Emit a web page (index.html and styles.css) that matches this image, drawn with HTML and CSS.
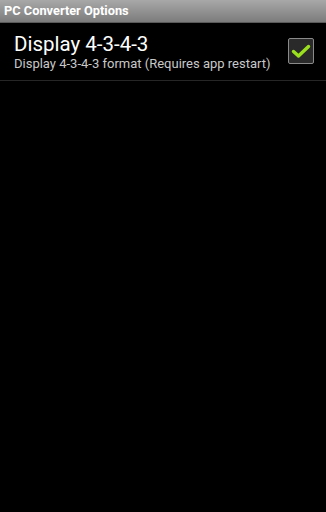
FILE: index.html
```html
<!DOCTYPE html>
<html lang="en">
<head>
    <meta charset="UTF-8">
    <title>PC Converter Options</title>
    <link rel="stylesheet" href="styles.css">
</head>
<body>
<div class="titlebar">PC Converter Options</div>
<div class="pref">
    <div class="pref-text">
        <div class="pref-title">Display 4-3-4-3</div>
        <div class="pref-summary">Display 4-3-4-3 format (Requires app restart)</div>
    </div>
    <div class="check">
        <svg width="20" height="16" viewBox="0 0 20 16">
            <path d="M2.5 8.5 L7.5 13 L17.5 3.5" fill="none" stroke="#9be01e" stroke-width="3.4" stroke-linecap="round" stroke-linejoin="round"/>
        </svg>
    </div>
</div>
</body>
</html>
```

FILE: styles.css
```css
* {
    padding: 0;
    margin: 0;
}

body {
    width: 326px;
    height: 512px;
    background: #000;
    font-family: Roboto, "Noto Sans", sans-serif;
    color: #fff;
}

.titlebar {
    height: 22px;
    line-height: 22px;
    padding-left: 4px;
    font-size: 12.8px;
    font-weight: bold;
    color: #fff;
    background: linear-gradient(#a8a8a8, #7c7c7c);
    border-bottom: 1px solid #5a5a5a;
}

.pref {
    display: flex;
    align-items: center;
    height: 57px;
    padding: 0 12px 0 14px;
    border-bottom: 1px solid #262626;
}

.pref-text {
    flex: 1;
}

.pref-title {
    font-size: 20.5px;
    line-height: 24px;
    color: #fff;
}

.pref-summary {
    font-size: 13px;
    line-height: 16px;
    color: #c8c8c8;
}

.check {
    width: 24px;
    height: 24px;
    border: 1px solid #8a8a8a;
    border-radius: 2px;
    background: #2a2a2a;
    display: flex;
    align-items: center;
    justify-content: center;
    margin-top: -2px;
}
```
